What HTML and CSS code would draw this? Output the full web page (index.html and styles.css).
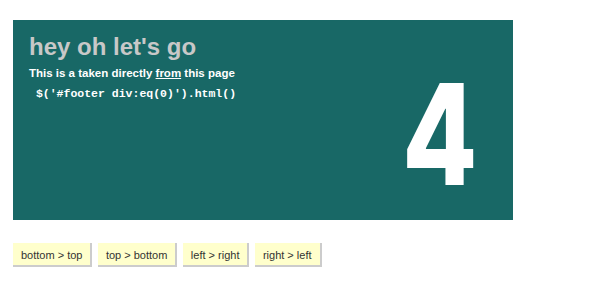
FILE: index.html
```html
<!DOCTYPE html>
<html lang="en">
<head>
  <meta charset="UTF-8" />
  <title>Slides</title>
  <link rel="stylesheet" href="styles.css">
</head>
<body>
  <div class="page">
    <div class="slide">
      <div class="slide-text">
        <h1>hey oh let's go</h1>
        <p>This is a taken directly <a href="#">from</a> this page</p>
        <code> $('#footer div:eq(0)').html()</code>
      </div>
      <div class="slide-num">4</div>
    </div>
    <div class="controls">
      <button>bottom &gt; top</button>
      <button>top &gt; bottom</button>
      <button>left &gt; right</button>
      <button>right &gt; left</button>
    </div>
  </div>
</body>
</html>
```

FILE: styles.css
```css
body {
  margin: 0;
  font-family: "Liberation Sans", Arial, sans-serif;
}
.page {
  padding: 20px 13px;
}
.slide {
  width: 500px;
  height: 200px;
  box-sizing: border-box;
  background: #186866;
  padding: 13px 36px 0 16px;
  display: flex;
  justify-content: space-between;
}
.slide h1 {
  margin: 0;
  font-size: 24px;
  color: #c8c8c8;
}
.slide p {
  margin: 6px 0 0;
  font-size: 11.5px;
  font-weight: bold;
  color: #fff;
}
.slide a {
  color: #fff;
}
.slide code {
  display: block;
  margin-top: 8px;
  font-family: "Liberation Mono", "Courier New", monospace;
  font-size: 11.5px;
  font-weight: bold;
  color: #fff;
  white-space: pre;
}
.slide-num {
  font-family: Inter, sans-serif;
  font-weight: 800;
  font-size: 140px;
  line-height: 1;
  color: #fff;
  margin-top: 31px;
  transform: scaleX(0.78);
  transform-origin: right top;
}
.controls {
  margin-top: 23px;
}
.controls button {
  font-family: "Liberation Sans", Arial, sans-serif;
  font-size: 11px;
  color: #333;
  background: #ffffcc;
  border: none;
  border-right: 2px solid #ccc;
  border-bottom: 2px solid #ccc;
  padding: 6px 8px 4px;
  margin-right: 1px;
}
```
